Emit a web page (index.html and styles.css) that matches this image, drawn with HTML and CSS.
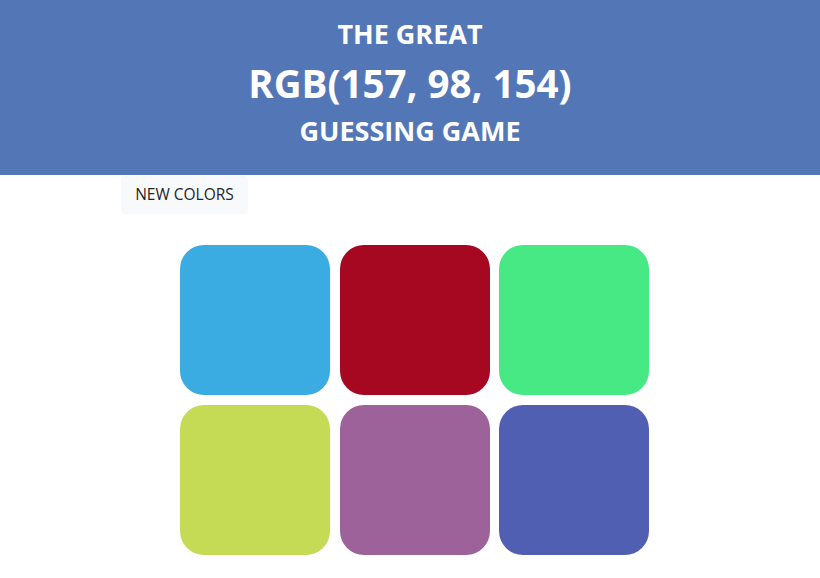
FILE: index.html
```html
<!DOCTYPE html>
<html>
<head>
<meta charset="utf-8">
<link rel="stylesheet" href="styles.css">
</head>
<body>
<header class="banner">
  <div class="line small">THE GREAT</div>
  <div class="line big">RGB(157, 98, 154)</div>
  <div class="line small">GUESSING GAME</div>
</header>
<div class="toolbar">
  <button class="btn">NEW COLORS</button>
</div>
<main class="grid">
  <div class="sq c1"></div>
  <div class="sq c2"></div>
  <div class="sq c3"></div>
  <div class="sq c4"></div>
  <div class="sq c5"></div>
  <div class="sq c6"></div>
</main>
</body>
</html>
```
FILE: styles.css
```css
* { box-sizing: border-box; }
html, body { margin: 0; padding: 0; background: #fff; }
body { font-family: "Open Sans", "Noto Sans", sans-serif; }
.banner {
  height: 175px;
  background: #5377b6;
  color: #fff;
  display: flex;
  flex-direction: column;
  align-items: center;
  padding-top: 14px;
  font-weight: 700;
}
.line { line-height: 1; }
.small { font-size: 27px; height: 38px; display: flex; align-items: center; }
.big { font-size: 38.5px; height: 59px; display: flex; align-items: center; padding-top: 3px; }
.toolbar { padding-left: 121px; }
.btn {
  font-family: "Open Sans", "Noto Sans", sans-serif;
  font-size: 15.5px;
  color: #212529;
  background: #f8f9fa;
  border: none;
  border-radius: 4px;
  height: 38px;
  width: 127px;
  padding: 0 0 3px 0;
  margin-top: 1px;
}
.grid {
  display: grid;
  grid-template-columns: repeat(3, 150px);
  gap: 10px 9.5px;
  justify-content: center;
  margin-top: 31px;
  padding-left: 9px;
}
.sq { width: 150px; height: 150px; border-radius: 24px; }
.c1 { background: #3bace2; }
.c2 { background: #a50820; }
.c3 { background: #47e985; }
.c4 { background: #c5db56; }
.c5 { background: #9d629a; }
.c6 { background: #515fb3; }
```
